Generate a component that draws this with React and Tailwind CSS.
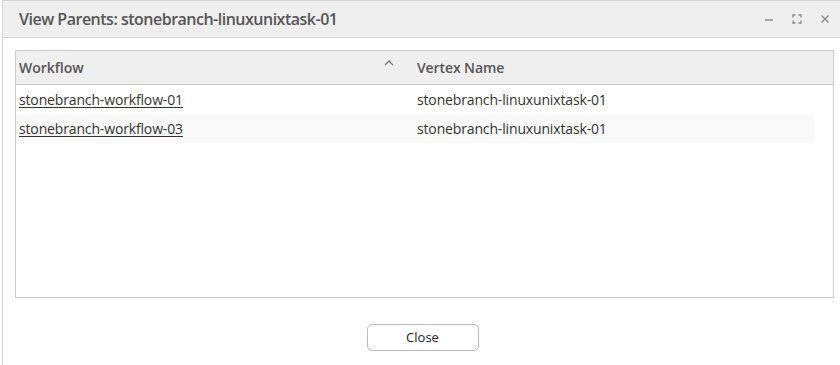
import React from "react";

const rows = [
  { workflow: "stonebranch-workflow-01", vertex: "stonebranch-linuxunixtask-01" },
  { workflow: "stonebranch-workflow-03", vertex: "stonebranch-linuxunixtask-01" },
];

export default function App() {
  return (
    <div
      className="w-[840px] h-[365px] bg-white overflow-hidden"
      style={{ fontFamily: "'Segoe UI', 'Open Sans', 'Noto Sans', sans-serif" }}
    >
      <div className="ml-[2px] h-full border-l border-t border-[#d4d4d4] bg-white flex flex-col">
        {/* Title bar */}
        <div className="h-[37px] bg-[#efefef] border-b border-[#d6d6d6] flex items-center pl-[16px] pr-[8px]">
          <h1 className="text-[16px] font-semibold text-[#555] tracking-[-0.5px]">
            View Parents: stonebranch-linuxunixtask-01
          </h1>
          <div className="ml-auto flex items-center gap-[14px] text-[#888]">
            <svg width="14" height="14" viewBox="0 0 14 14">
              <path d="M3 8h8" stroke="currentColor" strokeWidth="1.4" />
            </svg>
            <svg width="14" height="14" viewBox="0 0 14 14" fill="none" stroke="currentColor" strokeWidth="1.3">
              <path d="M3 5.5V3h2.5M8.5 3H11v2.5M11 8.5V11H8.5M5.5 11H3V8.5" />
            </svg>
            <svg width="14" height="14" viewBox="0 0 14 14" fill="none" stroke="currentColor" strokeWidth="1.3">
              <path d="M3.5 3.5l7 7M10.5 3.5l-7 7" />
            </svg>
          </div>
        </div>

        {/* Table */}
        <div className="mt-[12px] ml-[12px] w-[819px] h-[248px] border border-[#cccccc] flex flex-col">
          <div className="h-[34px] bg-[#efefef] border-b border-[#cccccc] flex items-center text-[14px] font-semibold text-[#555]">
            <div className="w-[400px] pl-[3px] flex items-center">
              <span>Workflow</span>
              <svg className="ml-auto mr-[22px] -mt-[10px]" width="10" height="6" viewBox="0 0 10 6" fill="none" stroke="#777" strokeWidth="1.3">
                <path d="M1 5l4-4 4 4" />
              </svg>
            </div>
            <div className="pl-[1px] tracking-[-0.1px]">Vertex Name</div>
          </div>
          <div className="w-[798px] text-[14px] text-[#333] tracking-[-0.15px]">
            {rows.map((r, i) => (
              <div
                key={r.workflow}
                className={`h-[29px] flex items-center ${i % 2 === 1 ? "bg-[#f9f9f9]" : "bg-white"}`}
              >
                <div className="w-[400px] pl-[3px]">
                  <a href="#" className="underline underline-offset-2">{r.workflow}</a>
                </div>
                <div className="pl-[1px]">{r.vertex}</div>
              </div>
            ))}
          </div>
        </div>

        {/* Footer */}
        <div className="flex justify-center mt-[26px]">
          <button className="w-[112px] h-[27px] rounded-[5px] border border-[#bbbbbb] bg-white text-[13px] text-[#222] ml-[2px]">
            Close
          </button>
        </div>
      </div>
    </div>
  );
}
